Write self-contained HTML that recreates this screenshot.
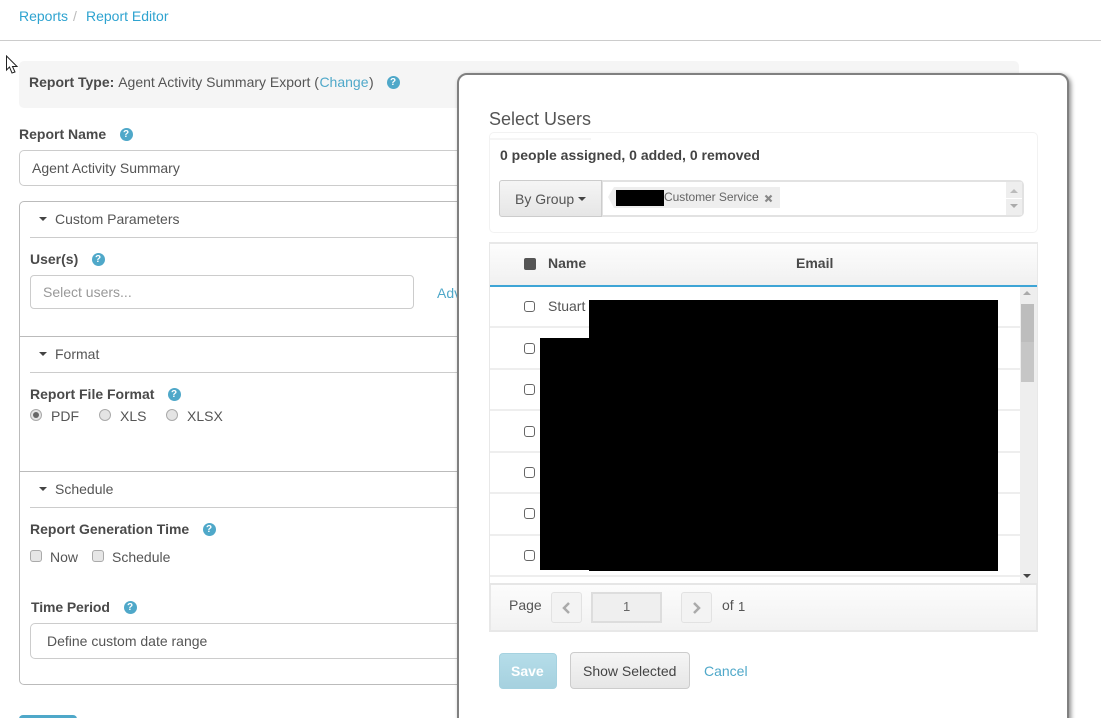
<!DOCTYPE html>
<html><head><meta charset="utf-8"><style>
html,body{margin:0;padding:0;background:#fff;width:1101px;height:718px;overflow:hidden}
#p{width:1101px;height:718px;position:relative;overflow:hidden;font-family:"Liberation Sans",Arial,sans-serif;font-size:14px;color:#555}
.a{position:absolute;white-space:nowrap}
.t{position:absolute;white-space:nowrap;line-height:16px}
.b{font-weight:bold;color:#4a4a4a}
.l{color:#2ea3d0}
.h{position:absolute;width:13px;height:13px;border-radius:50%;background:#4fa8c9;color:#fff;font:bold 10px/13px "Liberation Sans",sans-serif;text-align:center;margin:-.5px}
.c{position:absolute;width:0;height:0;border-left:4px solid transparent;border-right:4px solid transparent;border-top:4px solid #444}
.hr{position:absolute;height:1px;background:#ccc}
.r{position:absolute;width:10px;height:10px;border-radius:50%;background:#e4e4e4;border:1px solid #aaa}
.cb{position:absolute;width:10px;height:10px;border-radius:3px;background:#e6e6e6;border:1px solid #aaa}
.tc{position:absolute;left:524px;width:9px;height:9px;border:1px solid #666;border-radius:3px;background:#fff}
.row{position:absolute;left:490px;width:530px;height:2px;background:#eee}
.k{position:absolute;background:#000}
</style></head><body><div id="p">
<div class="t l" style="left:19px;top:8px">Reports</div>
<div class="t" style="left:73px;top:8px;color:#bbb">/</div>
<div class="t l" style="left:86px;top:8px">Report Editor</div>
<div class="hr" style="left:0;top:40px;width:1101px"></div>

<div class="a" style="left:19px;top:61px;width:1000px;height:47px;background:#f5f5f5;border-radius:5px"></div>
<div class="t" style="left:29px;top:74px"><span class="b">Report Type:</span><span style="margin-left:3.900px">Agent Activity Summary Export (</span><span style="color:#4fa8c9;margin-left:.5px">Change</span><span style="margin-left:.5px">)</span></div>
<div class="h" style="left:387px;top:76px">?</div>

<svg class="a" style="left:5px;top:55px" width="15" height="20" viewBox="0 0 15 20"><path d="M1.500 1V15L4.500 12L7 18L10 17L7.500 11.500H12Z" fill="#fff" stroke="#222" stroke-width="1"/></svg>

<div class="t b" style="left:19px;top:126px">Report Name</div>
<div class="h" style="left:120px;top:128px">?</div>
<div class="a" style="left:19px;top:150px;width:460px;height:34px;border:1px solid #ccc;border-radius:5px"></div>
<div class="t" style="left:32px;top:160px">Agent Activity Summary</div>

<div class="a" style="left:19px;top:201px;width:460px;height:482px;border:1px solid #bbb;border-radius:5px"></div>
<div class="c" style="left:39px;top:217px"></div>
<div class="t" style="left:55px;top:211px">Custom Parameters</div>
<div class="hr" style="left:30px;top:237px;width:430px"></div>
<div class="t b" style="left:30px;top:251px">User(s)</div>
<div class="h" style="left:92px;top:253px">?</div>
<div class="a" style="left:30px;top:275px;width:382px;height:32px;border:1px solid #ccc;border-radius:4px"></div>
<div class="t" style="left:43px;top:284px;color:#999">Select users...</div>
<div class="t" style="left:437px;top:285px;color:#4fa8c9">Adv</div>

<div class="hr" style="left:20px;top:336px;width:440px;background:#bbb"></div>
<div class="c" style="left:39px;top:352px"></div>
<div class="t" style="left:55px;top:346px">Format</div>
<div class="hr" style="left:30px;top:372px;width:430px"></div>
<div class="t b" style="left:30px;top:386px">Report File Format</div>
<div class="h" style="left:168px;top:388px">?</div>
<div class="r" style="left:30px;top:409px"></div>
<div class="a" style="left:33px;top:412px;width:6px;height:6px;border-radius:50%;background:#666"></div>
<div class="t" style="left:51px;top:408px">PDF</div>
<div class="r" style="left:99px;top:409px"></div>
<div class="t" style="left:120px;top:408px">XLS</div>
<div class="r" style="left:166px;top:409px"></div>
<div class="t" style="left:187px;top:408px">XLSX</div>

<div class="hr" style="left:20px;top:471px;width:440px;background:#bbb"></div>
<div class="c" style="left:39px;top:487px"></div>
<div class="t" style="left:55px;top:481px">Schedule</div>
<div class="hr" style="left:30px;top:507px;width:430px"></div>
<div class="t b" style="left:30px;top:521px">Report Generation Time</div>
<div class="h" style="left:203px;top:523px">?</div>
<div class="cb" style="left:30px;top:550px"></div>
<div class="t" style="left:50px;top:549px">Now</div>
<div class="cb" style="left:92px;top:550px"></div>
<div class="t" style="left:112px;top:549px">Schedule</div>
<div class="t b" style="left:31px;top:599px;letter-spacing:-.1px">Time Period</div>
<div class="h" style="left:124px;top:601px">?</div>
<div class="a" style="left:30px;top:623px;width:440px;height:34px;border:1px solid #ccc;border-radius:5px"></div>
<div class="t" style="left:47px;top:633px">Define custom date range</div>
<div class="a" style="left:19px;top:715px;width:58px;height:10px;background:#4fa8c9;border-radius:4px"></div>

<!-- modal -->
<div class="a" style="left:457px;top:73px;width:608px;height:660px;background:#fff;border:2px solid #808080;border-radius:10px;box-shadow:2px 2px 5px rgba(0,0,0,.45)"></div>
<div class="a" style="left:489px;top:108px;font-size:18px;line-height:22px;color:#555">Select Users</div>
<div class="a" style="left:489px;top:132px;width:547px;height:99px;border:1px solid #f2f2f2;border-radius:5px"></div>
<div class="a" style="left:490px;top:138px;width:101px;height:2px;background:#f5f5f5"></div>
<div class="t b" style="left:500px;top:147px;color:#444">0 people assigned, 0 added, 0 removed</div>

<div class="a" style="left:499px;top:180px;width:101px;height:35px;border:1px solid #ccc;border-radius:3px 0 0 3px;background:linear-gradient(#f5f5f5,#e6e6e6)"></div>
<div class="t" style="left:515px;top:191px">By Group</div>
<div class="c" style="left:578px;top:197px"></div>
<div class="a" style="left:602px;top:180px;width:419px;height:33px;border:2px solid #e2e2e2;border-left:1px solid #e2e2e2;border-radius:0 5px 5px 0;background:#fff"></div>
<div class="a" style="left:1006px;top:182px;width:16px;height:33px;background:#eee"></div>
<div class="a" style="left:1006px;top:198px;width:16px;height:1px;background:#fff"></div>
<div class="c" style="left:1010px;top:189px;border-top:0;border-bottom:4px solid #bbb"></div>
<div class="c" style="left:1010px;top:204px;border-top-color:#aaa"></div>
<div class="a" style="left:614px;top:187px;width:166px;height:21px;background:#eee"></div>
<div class="a" style="left:608px;top:187px;width:0;height:0;border-top:10px solid transparent;border-bottom:11px solid transparent;border-right:6px solid #eee"></div>
<div class="k" style="left:616px;top:190px;width:48px;height:16px"></div>
<div class="a" style="left:664px;top:190px;font-size:12px;line-height:15px;color:#666;letter-spacing:-.05px">Customer Service</div>
<svg class="a" style="left:764px;top:194px" width="9" height="9"><path d="M1.500 1.500L7.500 7.500M7.500 1.500L1.500 7.500" stroke="#888" stroke-width="2.200"/></svg>

<!-- table -->
<div class="a" style="left:489px;top:242px;width:549px;height:390px;background:#e8e8e8"></div>
<div class="a" style="left:490px;top:244px;width:547px;height:42px;background:linear-gradient(#fdfdfd,#f0f0f0)"></div>
<div class="a" style="left:490px;top:285px;width:547px;height:2px;background:#3ea5d6"></div>
<div class="a" style="left:524px;top:258px;width:12px;height:12px;border-radius:2px;background:#555"></div>
<div class="t b" style="left:548px;top:255px">Name</div>
<div class="t b" style="left:796px;top:255px">Email</div>
<div class="a" style="left:490px;top:287px;width:547px;height:296px;background:#fff"></div>
<div class="a" style="left:1020px;top:287px;width:17px;height:296px;background:#eee"></div>
<div class="a" style="left:1021px;top:304px;width:13px;height:38px;background:#bdbdbd"></div>
<div class="a" style="left:1021px;top:342px;width:13px;height:40px;background:#c6c6c6"></div>
<div class="c" style="left:1023px;top:291px;border-top:0;border-bottom:4px solid #aaa"></div>
<div class="c" style="left:1023px;top:574px"></div>
<div class="row" style="top:326px"></div>
<div class="row" style="top:368px"></div>
<div class="row" style="top:409px"></div>
<div class="row" style="top:451px"></div>
<div class="row" style="top:492px"></div>
<div class="row" style="top:534px"></div>
<div class="row" style="top:575px"></div>
<div class="tc" style="top:301px"></div>
<div class="tc" style="top:343px"></div>
<div class="tc" style="top:384px"></div>
<div class="tc" style="top:426px"></div>
<div class="tc" style="top:467px"></div>
<div class="tc" style="top:508px"></div>
<div class="tc" style="top:550px"></div>
<div class="t" style="left:548px;top:298px">Stuart</div>
<div class="k" style="left:589px;top:300px;width:409px;height:271px"></div>
<div class="k" style="left:540px;top:338px;width:49px;height:232px"></div>

<!-- pager -->
<div class="a" style="left:490px;top:583px;width:547px;height:2px;background:#e6e6e6"></div>
<div class="a" style="left:491px;top:585px;width:545px;height:45px;background:linear-gradient(#fcfcfc,#f2f2f2)"></div>
<div class="t" style="left:509px;top:597px">Page</div>
<div class="a" style="left:551px;top:592px;width:29px;height:29px;background:#f3f3f3;border:1px solid #e2e2e2;border-radius:3px"></div>
<svg class="a" style="left:551px;top:592px" width="31" height="31"><path d="M18 11L13 16L18 21" fill="none" stroke="#aaa" stroke-width="2.500"/></svg>
<div class="a" style="left:591px;top:592px;width:67px;height:27px;background:#efefef;border:2px solid #ddd"></div>
<div class="t" style="left:623px;top:599px;font-size:13px;color:#666">1</div>
<div class="a" style="left:681px;top:592px;width:29px;height:29px;background:#f3f3f3;border:1px solid #e2e2e2;border-radius:3px"></div>
<svg class="a" style="left:681px;top:592px" width="31" height="31"><path d="M13 11L18 16L13 21" fill="none" stroke="#aaa" stroke-width="2.500"/></svg>
<div class="t" style="left:722px;top:597px">of</div>
<div class="t" style="left:738px;top:599px;font-size:13px">1</div>

<!-- footer buttons -->
<div class="a" style="left:499px;top:653px;width:56px;height:34px;border:1px solid #a5d2e0;border-radius:4px;background:linear-gradient(#b5dde9,#a6d1df)"></div>
<div class="t" style="left:511px;top:663px;color:#fff;font-weight:bold">Save</div>
<div class="a" style="left:570px;top:652px;width:118px;height:35px;border:1px solid #ccc;border-radius:4px;background:linear-gradient(#f5f5f5,#e6e6e6)"></div>
<div class="t" style="left:583px;top:663px;color:#444">Show Selected</div>
<div class="t" style="left:704px;top:663px;color:#4fa8c9">Cancel</div>
</div></body></html>
